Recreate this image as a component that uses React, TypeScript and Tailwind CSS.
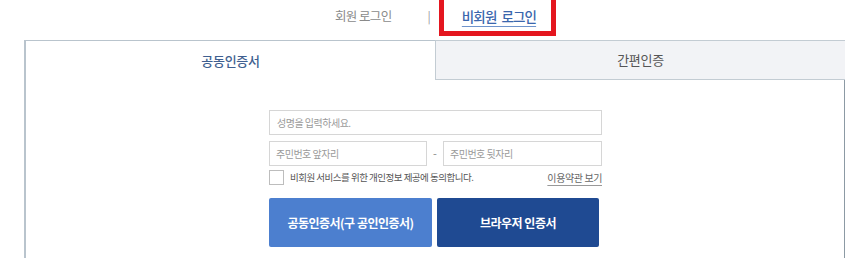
import type { FC } from "react";

const font = { fontFamily: '"Noto Sans CJK KR", "Noto Sans", sans-serif' };

const App: FC = () => {
  return (
    <div className="relative w-[850px] h-[258px] overflow-hidden bg-white" style={font}>
      {/* Member / non-member switch */}
      <div className="ml-[24px] w-[821px] h-[40px] flex items-start justify-center">
        <div className="flex items-center h-[32px] ml-[2px]">
          <span className="text-[#8a8a8a] text-[12.5px] tracking-[-0.6px]">회원 로그인</span>
          <span className="ml-[36px] mr-[31px] text-[#9a9a9a] text-[12px]">|</span>
          <span className="text-[#3a66ad] text-[13.5px] font-medium tracking-[-0.9px] [word-spacing:3px] underline underline-offset-[4px] decoration-[#6f94cc]">
            비회원 로그인
          </span>
        </div>
      </div>

      {/* Highlight annotation */}
      <div className="absolute left-[439px] top-[-6px] w-[117px] h-[42px] border-[5px] border-[#e4161f]" />

      {/* Login box */}
      <div className="ml-[24px] w-[821px]">
        <div className="flex h-[40px]">
          <div className="w-[411px] border-l-2 border-t border-[#b9c4cd] flex items-center justify-center text-[13px] tracking-[-0.3px] text-[#3f5f90] font-medium">
            공동인증서
          </div>
          <div className="flex-1 border-l border-t border-b border-[#c3ccd3] bg-[#f2f3f6] flex items-center justify-center text-[13px] tracking-[-0.3px] text-[#555]">
            간편인증
          </div>
        </div>

        <div className="border-l-2 border-r border-[#b9c4cd] border-r-[#8c9aa4] h-[180px] pt-[30px] flex flex-col items-center">
          <div className="w-[333px] flex flex-col ml-[1px]">
            <div className="h-[25px] border border-[#d6d6d6] flex items-center px-[7px] text-[10px] tracking-[-0.5px] text-[#9a9a9a]">
              성명을 입력하세요.
            </div>
            <div className="mt-[6px] flex items-center h-[25px]">
              <div className="w-[158px] h-full border border-[#d6d6d6] flex items-center px-[6px] text-[10px] tracking-[-0.5px] text-[#9a9a9a]">
                주민번호 앞자리
              </div>
              <div className="flex-1 text-center text-[11px] text-[#888]">-</div>
              <div className="w-[159px] h-full border border-[#d6d6d6] flex items-center px-[6px] text-[10px] tracking-[-0.5px] text-[#9a9a9a]">
                주민번호 뒷자리
              </div>
            </div>
            <div className="mt-[3px] flex items-center h-[16px]">
              <div className="w-[15px] h-[15px] border border-[#bdbdbd] bg-white" />
              <span className="ml-[6px] text-[9.5px] tracking-[-0.5px] text-[#555]">비회원 서비스를 위한 개인정보 제공에 동의합니다.</span>
              <span className="ml-auto text-[10px] tracking-[-0.4px] text-[#666] underline underline-offset-[3px] decoration-[#999]">
                이용약관 보기
              </span>
            </div>
            <div className="mt-[13px] flex gap-[5px]">
              <button className="w-[163px] h-[49px] rounded-[2px] bg-[#4c7fcf] text-white text-[12px] tracking-[-0.5px] font-bold">
                공동인증서(구 공인인증서)
              </button>
              <button className="w-[162px] h-[49px] rounded-[2px] bg-[#1f4a92] text-white text-[12px] tracking-[-0.5px] font-bold">
                브라우저 인증서
              </button>
            </div>
          </div>
        </div>
      </div>
    </div>
  );
};

export default App;
